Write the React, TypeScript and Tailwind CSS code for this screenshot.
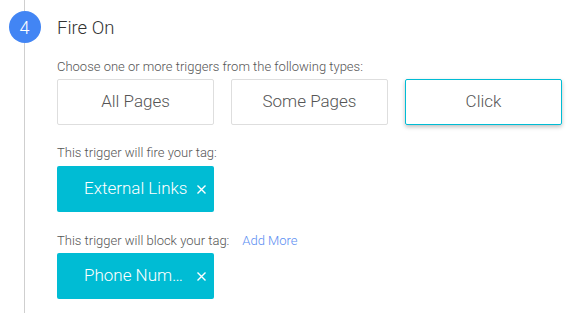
import React from "react";

const triggerTypes = ["All Pages", "Some Pages", "Click"];

const CloseIcon = () => (
  <svg width="9" height="9" viewBox="0 0 9 9" className="shrink-0">
    <path d="M0.5 0.5 L8.5 8.5 M8.5 0.5 L0.5 8.5" stroke="#fff" strokeWidth="1.4" />
  </svg>
);

const Chip = ({ label }: { label: string }) => (
  <div className="flex items-center justify-between w-[157px] h-[46px] rounded-[2px] bg-[#00bcd4] pl-[27px] pr-[8px] text-[17px] font-light text-white">
    <span className="whitespace-nowrap">{label}</span>
    <CloseIcon />
  </div>
);

const App = () => {
  const [selected] = React.useState("Click");

  return (
    <div className="flex w-[572px] h-[313px] bg-white font-['Roboto',sans-serif] font-light">
      <div className="flex flex-col items-center w-[49px]">
        <div className="w-px h-[11px] bg-[#cfcfcf]" />
        <div className="flex items-center justify-center w-8 h-8 rounded-full bg-[#4285f4] text-white text-[18px]">
          4
        </div>
        <div className="w-px flex-1 bg-[#cfcfcf]" />
      </div>

      <div className="ml-2 flex flex-col">
        <h2 className="mt-[16px] text-[18.5px] leading-[24px] font-light text-[#333]">Fire On</h2>

        <p className="mt-[19px] text-[13px] leading-[16px] text-[#555]">
          Choose one or more triggers from the following types:
        </p>

        <div className="mt-1 flex gap-[17px]">
          {triggerTypes.map((item) => (
            <button
              key={item}
              className={
                item === selected
                  ? "w-[157px] h-[46px] rounded-[2px] border border-[#00bcd4] shadow-[0_2px_4px_rgba(0,0,0,0.25)] text-[17px] text-[#555]"
                  : "w-[157px] h-[46px] rounded-[2px] border border-[#dedede] text-[17px] text-[#555]"
              }
            >
              {item}
            </button>
          ))}
        </div>

        <p className="mt-[20px] text-[13px] leading-[16px] text-[#555]">
          This trigger will fire your tag:
        </p>
        <div className="mt-[5px]">
          <Chip label="External Links" />
        </div>

        <p className="mt-[21px] text-[13px] leading-[16px] text-[#555]">
          This trigger will block your tag:
          <a className="ml-[13px] text-[#5a8ef2] cursor-pointer">Add More</a>
        </p>
        <div className="mt-1">
          <Chip label="Phone Num…" />
        </div>
      </div>
    </div>
  );
};

export default App;
